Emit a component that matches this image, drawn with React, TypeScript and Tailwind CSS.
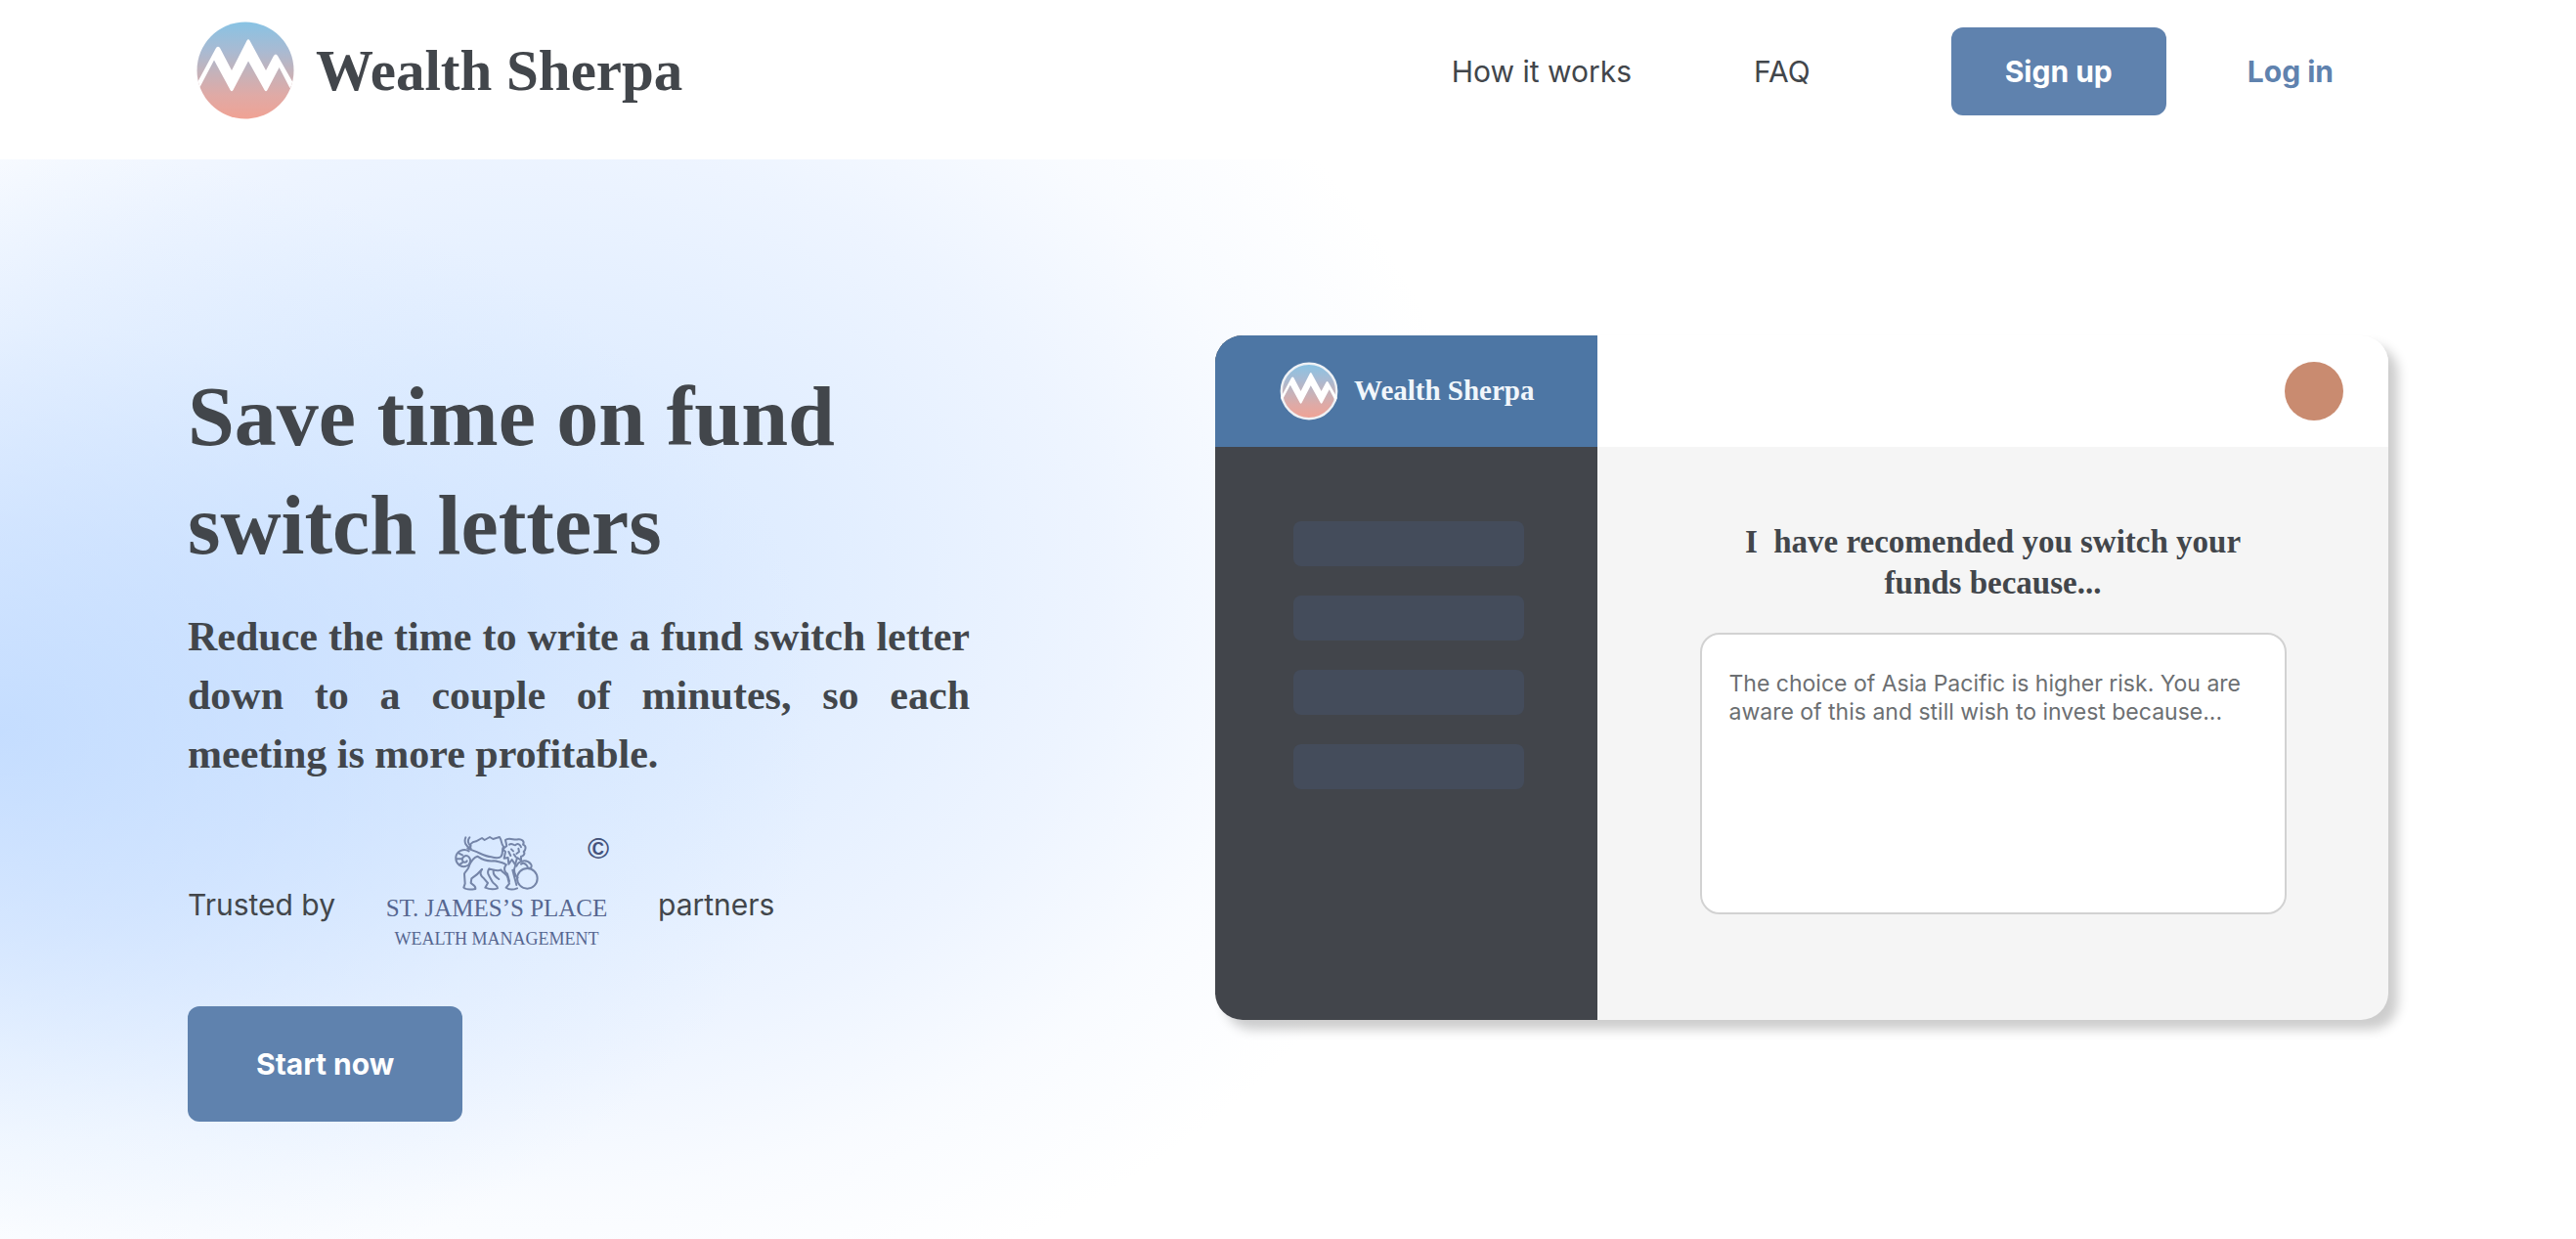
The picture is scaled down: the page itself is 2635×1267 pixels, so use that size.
import React from "react";

const serif = "font-['Liberation_Serif',serif] font-bold";

function Mountain({ id, className, ring = false }: { id: string; className: string; ring?: boolean }) {
  return (
    <svg viewBox="0 0 100 100" className={className} aria-hidden="true">
      <defs>
        <linearGradient id={id} x1="0" y1="0" x2="0" y2="1">
          <stop offset="0" stopColor="#88c3e4" />
          <stop offset="0.3" stopColor="#a9bad2" />
          <stop offset="0.5" stopColor="#c2b3bc" />
          <stop offset="0.75" stopColor="#dfaaa6" />
          <stop offset="1" stopColor="#f0a294" />
        </linearGradient>
        <clipPath id={`${id}-clip`}>
          <circle cx="50" cy="50" r="49.5" />
        </clipPath>
      </defs>
      <circle cx="50" cy="50" r={ring ? 47 : 49.5} fill={`url(#${id})`} stroke={ring ? "#eef1f5" : "none"} strokeWidth="4" />
      <path
        clipPath={`url(#${id}-clip)`}
        d="M0 64 L20 27 Q22 24.500 24 27 L36 50 L51.500 19.500 Q53 17 54.500 19.500 L71 50 L79 35 Q81 32 83 35 L99 63 L95.500 68 L84.600 47 L72.500 70 Q71 72.500 69.500 70 L53 40.500 L37.500 70 Q36 72.500 34.500 70 L18 39.500 L3 68 Z"
        fill="#fff"
      />
    </svg>
  );
}

function Lion() {
  return (
    <svg
      viewBox="0 0 258 168"
      className="h-14 w-[86px] text-[#7585a8]"
      fill="none"
      stroke="currentColor"
      strokeWidth="6"
      strokeLinecap="round"
      strokeLinejoin="round"
      aria-hidden="true"
    >
      <path d="M34 4 C28 18 34 32 50 38 C44 26 52 18 66 16 L84 6 L92 12 L108 3 L118 9 L138 3 C146 14 142 24 150 32 C144 42 150 52 143 62 C136 70 120 66 112 64 C92 62 78 52 62 46 L40 38" />
      <path d="M46 4 C38 14 42 24 50 30" />
      <path d="M44 46 C28 36 6 46 4 64 C2 84 20 98 36 92 C48 88 52 74 44 64 C36 56 22 62 24 74 C26 82 36 82 38 76" />
      <path d="M12 52 L24 58 M6 70 L22 70 M14 88 L26 80" />
      <path d="M44 92 C50 78 56 66 70 62 C84 72 100 78 120 76 C136 78 148 80 158 88" />
      <path d="M44 92 C44 102 34 106 30 116 L32 146 L28 158 C36 166 52 164 64 162 C66 152 54 148 50 144 L52 130 C62 124 74 114 84 102" />
      <path d="M84 102 C76 112 80 122 90 130 L102 144 L94 158 C108 164 122 164 132 160 C132 150 120 148 116 140 L106 122 C100 114 102 106 106 100 C118 104 132 108 142 104" />
      <path d="M120 104 C116 116 126 126 136 132 M142 104 C150 116 166 118 164 132 L168 146 L158 158 C168 166 182 164 192 160" />
      <path d="M158 88 C150 98 152 110 162 116 L168 138" />
      <path d="M156 12 C166 2 184 14 194 10 C206 8 216 16 210 26 C222 30 218 42 212 48 C218 54 210 62 204 62 L204 74 L192 66 L186 88 L176 72 L166 86 L164 66 L152 68 L156 48 L148 40 L160 30 Z" />
      <path d="M168 26 C176 20 180 28 186 28 C194 20 202 26 204 34 M174 40 L180 46 M196 38 L198 48 L190 54 M166 48 L172 60 M182 56 L188 64" />
      <path d="M190 92 C196 74 222 70 234 86 C240 94 234 100 228 98 M204 86 C212 80 220 86 224 94" />
      <circle cx="223" cy="130" r="31" />
      <path d="M186 92 C180 104 184 120 194 128 M178 104 L190 150" />
    </svg>
  );
}

function Header() {
  return (
    <header className="flex items-center justify-between bg-white px-48 pt-[22px] pb-[41px]">
      <a href="#" className="flex items-center gap-[22px] pl-[9px]">
        <Mountain id="brand-main" className="size-[100px]" />
        <span className={`${serif} text-[59px] leading-[80px]`}>Wealth Sherpa</span>
      </a>
      <nav className="flex items-center self-end pr-14 pb-1 text-[30px]">
        <a href="#how" className="mr-[125px]">How it works</a>
        <a href="#faq" className="mr-36">FAQ</a>
        <button className="mr-[83px] h-[90px] rounded-xl bg-[#5f82ae] px-[55px] font-bold text-white">Sign up</button>
        <a href="#login" className="font-bold text-[#5f82ae]">Log in</a>
      </nav>
    </header>
  );
}

function Pitch() {
  return (
    <section className="w-[800px] pt-7">
      <h1 className={`${serif} text-[86px] leading-[111px]`}>Save time on fund switch letters</h1>
      <p className={`${serif} mt-7 text-justify text-[42px] leading-[60px]`}>
        Reduce the time to write a fund switch letter down to a couple of minutes, so each meeting is more profitable.
      </p>
      <div className="mt-[54px] flex items-end text-[30px] leading-9">
        <span className="pb-[30px]">Trusted by</span>
        <div className="relative mx-[50px] flex w-[230px] flex-col items-center font-['Liberation_Serif',serif] whitespace-nowrap text-[#566690]">
          <Lion />
          <span className="text-[25px] leading-[36px]">ST. JAMES’S PLACE</span>
          <span className="text-[18px] leading-[26px]">WEALTH MANAGEMENT</span>
          <span className="absolute top-0 right-0 font-['Liberation_Sans',sans-serif] text-[30px] leading-[26px] font-bold text-[#44527b]">©</span>
        </div>
        <span className="pb-[30px]">partners</span>
      </div>
      <button className="mt-14 h-[118px] rounded-xl bg-[#5f82ae] px-[70px] text-[30px] font-bold text-white">Start now</button>
    </section>
  );
}

function Preview() {
  return (
    <section className="flex h-[700px] w-full max-w-[1200px] overflow-hidden rounded-[28px] bg-[#f5f5f5] shadow-[10px_10px_12px_rgba(0,0,0,0.2)]">
      <aside className="w-[391px] shrink-0 bg-[#42454b]">
        <div className="flex h-[114px] items-center gap-4 bg-[#4d76a4] pl-[66px]">
          <Mountain id="brand-small" className="size-[60px]" ring />
          <span className={`${serif} text-[29px] text-[#f1f6fb]`}>Wealth Sherpa</span>
        </div>
        <div className="grid gap-[30px] py-[76px] pr-[75px] pl-20">
          {[0, 1, 2, 3].map((n) => (
            <div key={n} className="h-[46px] rounded-lg bg-[#444c5b]" />
          ))}
        </div>
      </aside>
      <div className="flex-1">
        <div className="flex h-[114px] items-center justify-end bg-white pr-[46px]">
          <div className="size-[60px] rounded-full bg-[#c98b70]" />
        </div>
        <div className="flex flex-col items-center pt-[76px]">
          <label htmlFor="reason" className={`${serif} text-center text-[33px] leading-[42px]`}>
            I&nbsp; have recomended you switch your
            <br />
            funds because...
          </label>
          <textarea
            id="reason"
            className="mt-[30px] h-[288px] w-[600px] resize-none rounded-[20px] border-2 border-[#d2d2d2] bg-white px-7 py-9 text-[23px] leading-[29px] text-[#6c6f72]"
            defaultValue={"The choice of Asia Pacific is higher risk. You are\naware of this and still wish to invest because..."}
          />
        </div>
      </div>
    </section>
  );
}

export default function App() {
  return (
    <div className="bg-white font-['Inter',sans-serif] text-[#42464b]">
      <Header />
      <main className="flex items-start justify-between gap-16 bg-[radial-gradient(ellipse_32%_54%_at_0%_53%,#b8d6ffc0_0%,#bcd8ff88_35%,#c6dfff38_70%,#cfe4ff00_100%),radial-gradient(ellipse_38%_70%_at_20%_40%,#d8e8ff_0%,#dbeaffd8_30%,#e0ecff90_60%,#e8f1ff48_80%,#f0f6ff00_100%)] px-48 pt-[180px] pb-[120px]">
        <Pitch />
        <Preview />
      </main>
    </div>
  );
}
